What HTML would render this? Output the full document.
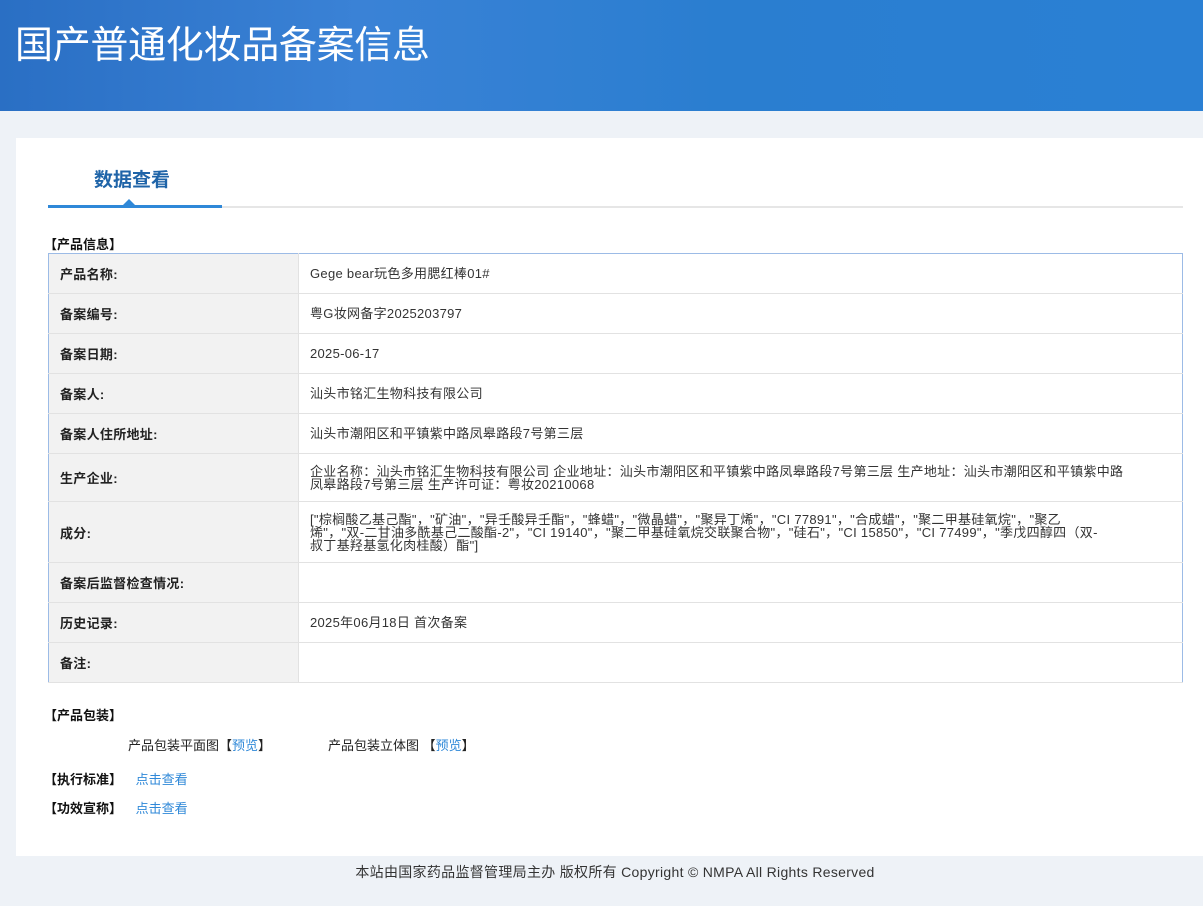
<!DOCTYPE html>
<html><head><meta charset="utf-8"><style>
body{margin:0;width:1203px;height:906px;background:#eef2f7;font-family:"Liberation Sans","Noto Sans CJK SC",sans-serif;font-size:13px;color:#333;position:relative;overflow:hidden}
.hd{position:absolute;left:0;top:0;width:1203px;height:111px;background:linear-gradient(90deg,#2a6fc4 0%,#3a82d6 30%,#2a7ed0 60%,#2a80d4 100%)}
.hd h1{position:absolute;left:15px;top:14px;margin:0;font-size:38px;font-weight:normal;color:#fff;letter-spacing:-0.3px}
.main{position:absolute;left:16px;top:138px;width:1187px;height:718px;background:#fff}
.tab{position:absolute;left:78px;top:27px;font-size:19px;font-weight:bold;color:#1f64a8}
.line{position:absolute;left:32px;top:68px;width:1135px;height:2px;background:#e6e6e6}
.line2{position:absolute;left:32px;top:67px;width:174px;height:3px;background:#2f88d8}
.tri{position:absolute;left:107px;top:61px;width:0;height:0;border-left:6px solid transparent;border-right:6px solid transparent;border-bottom:6px solid #2f88d8}
.sec{position:absolute;font-weight:bold;color:#111}
table{position:absolute;left:32px;top:115px;width:1135px;border-collapse:collapse;border:1px solid #9cbbe6}
td{border-bottom:1px solid #e2e2e2;padding:0 11px;vertical-align:middle;letter-spacing:0.3px}
td.l{width:227px;background:#f2f2f2;font-weight:bold;color:#222;border-right:1px solid #e2e2e2}
td.v{line-height:13px;color:#333}
a{color:#2f88d8;text-decoration:none}
.ft{position:absolute;left:0;width:1230px;top:862px;text-align:center;font-size:14px;color:#333;letter-spacing:0.3px}
</style></head><body>
<div class="hd"><h1>国产普通化妆品备案信息</h1></div>
<div class="main">
<div class="tab">数据查看</div>
<div class="line"></div><div class="line2"></div><div class="tri"></div>
<div class="sec" style="left:28px;top:96px">【产品信息】</div>
<table>
<tr style="height:40px"><td class="l">产品名称:</td><td class="v">Gege bear玩色多用腮红棒01#</td></tr>
<tr style="height:40px"><td class="l">备案编号:</td><td class="v">粤G妆网备字2025203797</td></tr>
<tr style="height:40px"><td class="l">备案日期:</td><td class="v">2025-06-17</td></tr>
<tr style="height:40px"><td class="l">备案人:</td><td class="v">汕头市铭汇生物科技有限公司</td></tr>
<tr style="height:40px"><td class="l">备案人住所地址:</td><td class="v">汕头市潮阳区和平镇紫中路凤皋路段7号第三层</td></tr>
<tr style="height:48px"><td class="l">生产企业:</td><td class="v">企业名称：汕头市铭汇生物科技有限公司 企业地址：汕头市潮阳区和平镇紫中路凤皋路段7号第三层 生产地址：汕头市潮阳区和平镇紫中路<br>凤皋路段7号第三层 生产许可证：粤妆20210068</td></tr>
<tr style="height:61px"><td class="l">成分:</td><td class="v">["棕榈酸乙基己酯"，"矿油"，"异壬酸异壬酯"，"蜂蜡"，"微晶蜡"，"聚异丁烯"，"CI 77891"，"合成蜡"，"聚二甲基硅氧烷"，"聚乙<br>烯"，"双-二甘油多酰基己二酸酯-2"，"CI 19140"，"聚二甲基硅氧烷交联聚合物"，"硅石"，"CI 15850"，"CI 77499"，"季戊四醇四（双-<br>叔丁基羟基氢化肉桂酸）酯"]</td></tr>
<tr style="height:40px"><td class="l">备案后监督检查情况:</td><td class="v"></td></tr>
<tr style="height:40px"><td class="l">历史记录:</td><td class="v">2025年06月18日 首次备案</td></tr>
<tr style="height:40px"><td class="l">备注:</td><td class="v"></td></tr>
</table>
<div class="sec" style="left:28px;top:567px">【产品包装】</div>
<div style="position:absolute;left:112px;top:597px;color:#222">产品包装平面图【<a>预览</a>】</div>
<div style="position:absolute;left:312px;top:597px;color:#222">产品包装立体图 【<a>预览</a>】</div>
<div class="sec" style="left:28px;top:631px">【执行标准】 <a style="font-weight:normal;margin-left:10px">点击查看</a></div>
<div class="sec" style="left:28px;top:660px">【功效宣称】 <a style="font-weight:normal;margin-left:10px">点击查看</a></div>
</div>
<div class="ft">本站由国家药品监督管理局主办 版权所有 Copyright © NMPA All Rights Reserved</div>
</body></html>
